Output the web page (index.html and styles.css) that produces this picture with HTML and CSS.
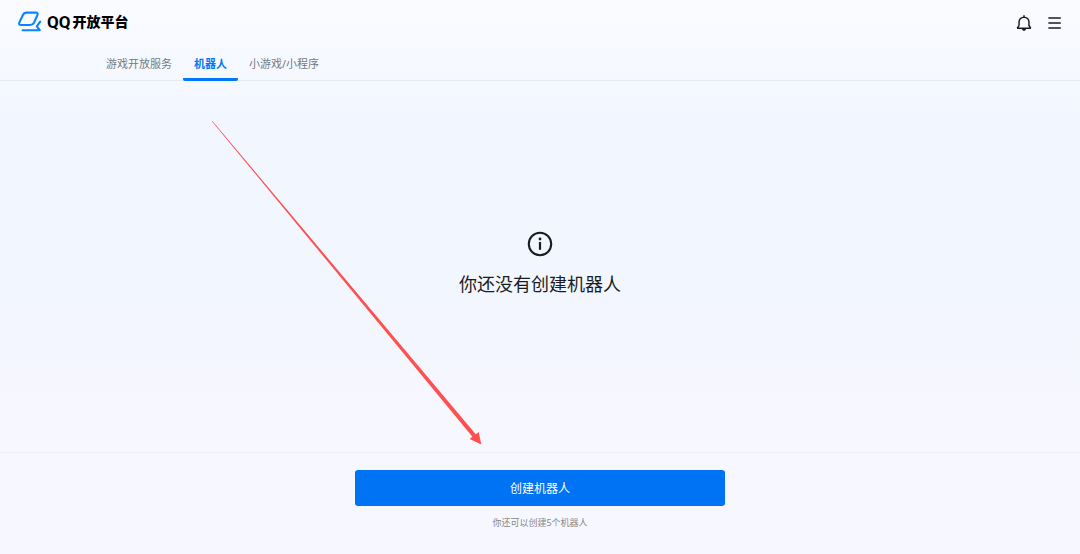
FILE: index.html
```html
<!DOCTYPE html>
<html lang="zh-CN">
<head>
    <meta charset="UTF-8">
    <meta name="viewport" content="width=device-width, initial-scale=1.0">
    <title>QQ开放平台</title>
    <link rel="stylesheet" href="styles.css">
</head>
<body>
    <header class="header">
        <a class="logo" href="#">
            <svg class="logo-mark" viewBox="0 0 26 22" fill="none" stroke="#0a84ff" stroke-width="2.1" stroke-linecap="round" stroke-linejoin="round">
                <path d="M9.6 1.6H18.6Q21.6 1.6 20.4 4.3L17 11.8Q15.9 14 13.2 14H4.2Q1.2 14 2.4 11.4L5.9 4Q7 1.6 9.6 1.6Z"/>
                <path d="M5.6 19.2H22.8L19.8 15.4L23.2 10.6"/>
            </svg>
            <span class="logo-text"><span class="logo-qq">QQ</span>开放平台</span>
        </a>
        <div class="header-actions">
            <button class="icon-button" type="button" aria-label="通知">
                <svg viewBox="0 0 16 16" fill="none" stroke="#1a1c1e" stroke-width="1.3" stroke-linejoin="round">
                    <path d="M8 1V2.8M1.8 12.6H14.2M3.6 10.2V7.2A4.4 4.4 0 0 1 12.4 7.2V10.2L14 12.6M3.6 10.2L2 12.6"/>
                    <path d="M6 13.2H10Q9.6 15 8 15T6 13.2Z" fill="#1a1c1e" stroke="none"/>
                </svg>
            </button>
            <button class="icon-button" type="button" aria-label="菜单">
                <svg viewBox="0 0 16 16" fill="none" stroke="#1a1c1e" stroke-width="1.3">
                    <path d="M3 3.6H14M3 8H14M3 12.4H14"/>
                </svg>
            </button>
        </div>
    </header>

    <nav class="tabs">
        <a class="tab" href="#">游戏开放服务</a>
        <a class="tab active" href="#">机器人</a>
        <a class="tab" href="#">小游戏/小程序</a>
    </nav>

    <main class="empty">
        <svg class="empty-icon" viewBox="0 0 26 26" fill="none" stroke="#1a1c1e">
            <circle cx="13" cy="13" r="11.2" stroke-width="2.1"/>
            <path d="M13 11V18.8" stroke-width="2.2"/>
            <circle cx="13" cy="8" r="1.4" fill="#1a1c1e" stroke="none"/>
        </svg>
        <h1 class="empty-title">你还没有创建机器人</h1>
    </main>

    <footer class="footer">
        <button class="create-button" type="button">创建机器人</button>
        <p class="hint">你还可以创建5个机器人</p>
    </footer>

    <!-- arrow pointing at the create button -->
    <svg class="arrow" viewBox="0 0 270 324" fill="#ff5050">
        <path d="M-.3 .1L.3 -.1L263.8 313.2L266.6 311L269.4 323.4L257.6 318L260.4 315.8Z"/>
    </svg>
</body>
</html>
```

FILE: styles.css
```css
* {
    margin: 0;
    padding: 0;
    box-sizing: border-box;
}

body {
    display: flex;
    flex-direction: column;
    min-height: 100vh;
    font-family: "Noto Sans", "Noto Sans CJK SC", sans-serif;
    color: #1a1c1e;
    background: linear-gradient(180deg, #fafbff 0%, #f1f6ff 25%, #f3f6ff 55%, #f7f7ff 80%, #f7f7ff 100%);
}

a {
    color: inherit;
    text-decoration: none;
}

button {
    border: none;
    background: none;
    font-family: inherit;
    cursor: pointer;
}

.header {
    display: flex;
    align-items: center;
    justify-content: space-between;
    height: 44px;
    padding: 0 17px;
}

.logo {
    display: flex;
    align-items: center;
    gap: 4px;
}

.logo-mark {
    width: 26px;
    height: 22px;
}

.logo-text {
    display: flex;
    align-items: center;
    gap: 2px;
    font-size: 14px;
    font-weight: 900;
    line-height: 20px;
    color: #000;
}

.logo-qq {
    font-family: Roboto, sans-serif;
    font-size: 17px;
    font-weight: 700;
}

.header-actions {
    display: flex;
    gap: 12px;
    padding-top: 2px;
}

.icon-button {
    width: 18px;
    height: 18px;
}

.icon-button svg {
    display: block;
    width: 18px;
    height: 18px;
}

.tabs {
    display: flex;
    height: 37px;
    padding-left: 95px;
    border-bottom: 1px solid #e6e9f1;
}

.tab {
    height: 37px;
    padding: 0 11px;
    font-size: 11px;
    line-height: 40px;
    color: #77797e;
    border-bottom: 3px solid transparent;
}

.tab.active {
    color: #0077f8;
    font-weight: 700;
    border-bottom-color: #0077f8;
    border-radius: 2px;
}

.empty {
    flex: 1;
    display: flex;
    flex-direction: column;
    align-items: center;
    justify-content: center;
    gap: 14px;
    padding-bottom: 6px;
}

.empty-icon {
    width: 26px;
    height: 26px;
}

.empty-title {
    font-size: 18px;
    font-weight: 400;
    line-height: 26px;
}

.footer {
    display: flex;
    flex-direction: column;
    align-items: center;
    gap: 10px;
    padding: 17px 20px 24px;
    border-top: 1px solid #eeeff4;
}

.create-button {
    width: 100%;
    max-width: 370px;
    height: 36px;
    border-radius: 3px;
    background: #0073f5;
    color: #fff;
    font-size: 12px;
}

.hint {
    font-size: 9px;
    line-height: 14px;
    color: #85878c;
}

.arrow {
    position: absolute;
    top: 121px;
    left: 212px;
    width: 270px;
    height: 324px;
    pointer-events: none;
}
```
